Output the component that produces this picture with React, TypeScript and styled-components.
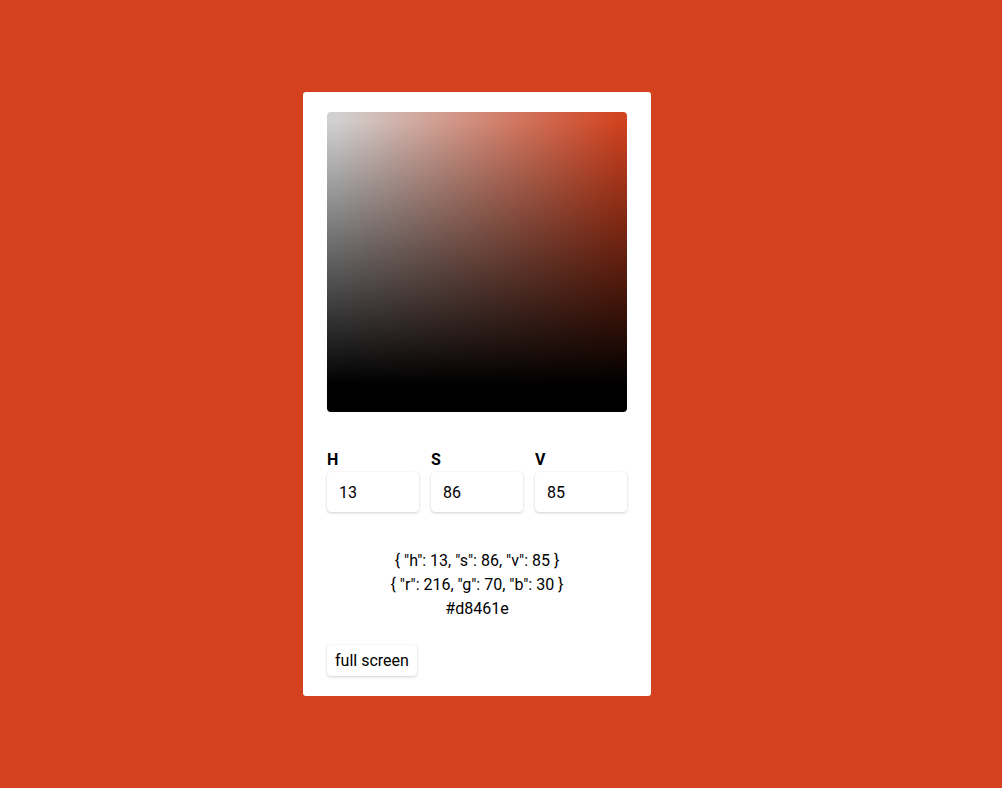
import React from "react";
import styled, { createGlobalStyle } from "styled-components";

const Global = createGlobalStyle`
  html, body { margin: 0; padding: 0; }
  body {
    background: #d4411f;
    font-family: Roboto, "Liberation Sans", "Noto Sans", sans-serif;
    color: #000;
  }
`;

const Page = styled.div`
  box-sizing: border-box;
  width: 100%;
  height: 788px;
  display: flex;
  align-items: center;
  justify-content: center;
  padding-right: 48px;
`;

const Card = styled.div`
  box-sizing: border-box;
  width: 348px;
  background: #fff;
  border-radius: 3px;
  padding: 20px 24px 20px;
  display: flex;
  flex-direction: column;
`;

const Square = styled.div`
  width: 300px;
  height: 300px;
  border-radius: 4px;
  background:
    linear-gradient(to bottom, rgba(0, 0, 0, 0.18) 3%, rgba(0, 0, 0, 0.58) 45%, #000 91%),
    linear-gradient(to right, #fff 3%, rgb(255, 82, 40) 97%);
`;

const Fields = styled.div`
  display: grid;
  grid-template-columns: repeat(3, 1fr);
  gap: 12px;
  margin-top: 38px;
`;

const Field = styled.label`
  display: flex;
  flex-direction: column;
  gap: 2px;
`;

const Label = styled.span`
  font-size: 16px;
  font-weight: 700;
  line-height: 20px;
`;

const Input = styled.input`
  box-sizing: border-box;
  width: 100%;
  height: 40px;
  border: none;
  border-radius: 4px;
  background: #fff;
  box-shadow: 0 1px 3px rgba(0, 0, 0, 0.18), 0 0 1px rgba(0, 0, 0, 0.08);
  padding: 0 12px;
  font-family: inherit;
  font-size: 16px;
  color: #000;
  outline: none;
`;

const Output = styled.div`
  margin-top: 37px;
  text-align: center;
  font-size: 16px;
  line-height: 24px;
`;

const Button = styled.button`
  align-self: flex-start;
  margin-top: 24px;
  height: 31px;
  padding: 0 8px;
  border: none;
  border-radius: 4px;
  background: #fff;
  box-shadow: 0 1px 3px rgba(0, 0, 0, 0.18), 0 0 1px rgba(0, 0, 0, 0.08);
  font-family: inherit;
  font-size: 16px;
  color: #000;
`;

export default function App() {
  const hsv = { h: 13, s: 86, v: 85 };
  const rgb = { r: 216, g: 70, b: 30 };
  return (
    <>
      <Global />
      <Page>
        <Card>
          <Square />
          <Fields>
            <Field>
              <Label>H</Label>
              <Input defaultValue={hsv.h} />
            </Field>
            <Field>
              <Label>S</Label>
              <Input defaultValue={hsv.s} />
            </Field>
            <Field>
              <Label>V</Label>
              <Input defaultValue={hsv.v} />
            </Field>
          </Fields>
          <Output>
            <div>{`{ "h": ${hsv.h}, "s": ${hsv.s}, "v": ${hsv.v} }`}</div>
            <div>{`{ "r": ${rgb.r}, "g": ${rgb.g}, "b": ${rgb.b} }`}</div>
            <div>#d8461e</div>
          </Output>
          <Button>full screen</Button>
        </Card>
      </Page>
    </>
  );
}
